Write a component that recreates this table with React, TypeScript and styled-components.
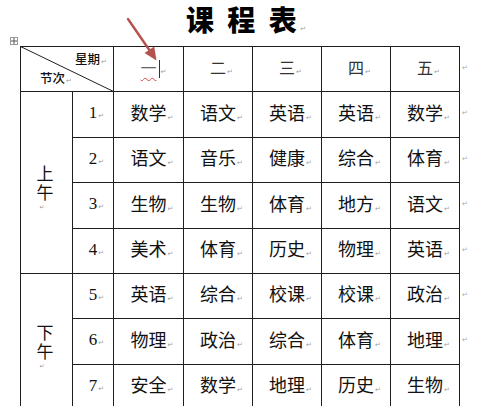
import React from "react";
import styled, { createGlobalStyle } from "styled-components";

const GlobalStyle = createGlobalStyle`
  html, body {
    margin: 0;
    padding: 0;
    background: #ffffff;
    overflow: hidden;
  }
  body {
    font-family: "Noto Sans CJK SC", "Noto Sans", sans-serif;
    color: #111;
  }
`;

const Page = styled.div`
  position: relative;
  width: 485px;
  height: 406px;
  overflow: hidden;
  background: #fff;
`;

const TitleRow = styled.div`
  height: 37px;
  box-sizing: border-box;
  padding: 5px 0 0 7px;
  display: flex;
  justify-content: center;
`;

const Title = styled.h1`
  margin: 0;
  font-family: "Noto Sans CJK SC", sans-serif;
  font-size: 28px;
  line-height: 28px;
  font-weight: 900;
  letter-spacing: 3.5px;
  color: #000;
  white-space: pre;
`;

const HandleRow = styled.div`
  height: 9px;
  padding-left: 10px;
  display: flex;
  align-items: flex-start;
`;

const Handle = styled.div`
  width: 8px;
  height: 8px;
  box-sizing: border-box;
  border: 1px solid #9a9a9a;
  display: flex;
  align-items: center;
  justify-content: center;
  background: #fff;
`;

const TableRow = styled.div`
  display: flex;
  margin-left: 20px;
`;

const Grid = styled.div`
  display: grid;
  grid-template-columns: 52px 41px 70px 69px 69px 69px 69px;
  grid-template-rows: 45px 46px 45px 46px 45px 45px 46px 45px;
  border-left: 1px solid #1e1e1e;
  border-top: 1px solid #1e1e1e;
`;

const Cell = styled.div<{ $span?: number; $rows?: number }>`
  box-sizing: border-box;
  border-right: 1px solid #1e1e1e;
  border-bottom: 1px solid #1e1e1e;
  display: flex;
  align-items: center;
  justify-content: center;
  ${(p) => (p.$span ? `grid-column: span ${p.$span};` : "")}
  ${(p) => (p.$rows ? `grid-row: span ${p.$rows};` : "")}
`;

const HeaderCell = styled(Cell)`
  position: relative;
  flex-direction: column;
  align-items: stretch;
  justify-content: space-between;
  padding: 4px 13px 5px 19px;
`;

const Diagonal = styled.svg`
  position: absolute;
  left: -1px;
  top: -1px;
  pointer-events: none;
`;

const HeadLabel = styled.span<{ $end?: boolean }>`
  align-self: ${(p) => (p.$end ? "flex-end" : "flex-start")};
  font-family: "Noto Sans CJK SC", sans-serif;
  font-size: 12.5px;
  line-height: 15px;
  font-weight: 500;
  color: #111;
  white-space: nowrap;
`;

const DayText = styled.span<{ $active?: boolean }>`
  font-family: "Noto Sans CJK SC", sans-serif;
  font-size: 16px;
  line-height: 18px;
  font-weight: 400;
  color: ${(p) => (p.$active ? "#666666" : "#333333")};
  white-space: nowrap;
`;

const Squiggle = styled.span`
  text-decoration-line: underline;
  text-decoration-style: wavy;
  text-decoration-color: #d9484a;
  text-decoration-thickness: 1px;
  text-underline-offset: 3px;
`;

const PeriodText = styled.div`
  font-family: "Noto Sans CJK SC", sans-serif;
  font-size: 17px;
  line-height: 19px;
  font-weight: 400;
  color: #111;
  display: flex;
  flex-direction: column;
  align-items: center;
  margin-left: -3px;
`;

const PeriodMark = styled.span`
  height: 0;
  font-family: "DejaVu Sans", sans-serif;
  font-size: 6px;
  line-height: 8px;
  color: #9a9a9a;
  margin: 2px 0 0 -6px;
`;

const NumText = styled.span`
  font-family: "Liberation Serif", serif;
  font-size: 17px;
  line-height: 20px;
  color: #111;
  white-space: nowrap;
`;

const Subject = styled.span`
  font-family: "Noto Sans CJK SC", sans-serif;
  font-size: 18px;
  line-height: 22px;
  font-weight: 400;
  color: #111;
  white-space: nowrap;
`;

const MarkBox = styled.span`
  display: inline-block;
  width: 0;
  overflow: visible;
  white-space: nowrap;
  vertical-align: baseline;
`;

const MarkGlyph = styled.span`
  font-family: "DejaVu Sans", sans-serif;
  font-size: 7px;
  color: #a0a0a0;
  margin-left: 1px;
`;

const Caret = styled.span`
  display: inline-block;
  width: 1px;
  height: 18px;
  background: #333;
  margin-left: 2px;
  vertical-align: -4px;
`;

const MarkColumn = styled.div`
  display: grid;
  grid-template-rows: 45px 46px 45px 46px 45px 45px 46px;
  padding-top: 1px;
  margin-left: 2px;
`;

const RowMark = styled.span`
  display: flex;
  align-items: center;
  font-family: "DejaVu Sans", sans-serif;
  font-size: 7px;
  color: #a8a8a8;
  padding-bottom: 4px;
`;

const TitleMark = styled.span`
  font-family: "DejaVu Sans", sans-serif;
  font-size: 7px;
  font-weight: 400;
  color: #a0a0a0;
  letter-spacing: 0;
`;

const Overlay = styled.svg`
  position: absolute;
  left: 0;
  top: 0;
  pointer-events: none;
`;

const Mark: React.FC = () => (
  <MarkBox>
    <MarkGlyph>↵</MarkGlyph>
  </MarkBox>
);

const days = ["一", "二", "三", "四", "五"];

const morning = [
  ["数学", "语文", "英语", "英语", "数学"],
  ["语文", "音乐", "健康", "综合", "体育"],
  ["生物", "生物", "体育", "地方", "语文"],
  ["美术", "体育", "历史", "物理", "英语"],
];

const afternoon = [
  ["英语", "综合", "校课", "校课", "政治"],
  ["物理", "政治", "综合", "体育", "地理"],
  ["安全", "数学", "地理", "历史", "生物"],
];

const renderRows = (rows: string[][], start: number) =>
  rows.map((row, i) => (
    <React.Fragment key={start + i}>
      <Cell>
        <NumText>
          {start + i}
          <Mark />
        </NumText>
      </Cell>
      {row.map((s, j) => (
        <Cell key={j}>
          <Subject>
            {s}
            <Mark />
          </Subject>
        </Cell>
      ))}
    </React.Fragment>
  ));

export default function App() {
  return (
    <Page>
      <GlobalStyle />
      <TitleRow>
        <Title>
          课 程 表<TitleMark>↵</TitleMark>
        </Title>
      </TitleRow>
      <HandleRow>
        <Handle>
          <svg width="6" height="6" viewBox="0 0 6 6">
            <path d="M3 0 V6 M0 3 H6" stroke="#555" strokeWidth="1" />
          </svg>
        </Handle>
      </HandleRow>
      <TableRow>
        <Grid>
          <HeaderCell $span={2}>
            <Diagonal width="94" height="46" viewBox="0 0 94 46">
              <line x1="0.5" y1="0.5" x2="93.5" y2="45.5" stroke="#1e1e1e" strokeWidth="1" />
            </Diagonal>
            <HeadLabel $end>
              星期
              <Mark />
            </HeadLabel>
            <HeadLabel>
              节次
              <Mark />
            </HeadLabel>
          </HeaderCell>
          {days.map((d, i) => (
            <Cell key={d}>
              <DayText $active={i === 0}>
                {i === 0 ? <Squiggle>{d}</Squiggle> : d}
                <MarkBox>
                  {i === 0 && <Caret />}
                  <MarkGlyph>↵</MarkGlyph>
                </MarkBox>
              </DayText>
            </Cell>
          ))}
          <Cell $rows={4}>
            <PeriodText>
              <span>上</span>
              <span>午</span>
              <PeriodMark>↵</PeriodMark>
            </PeriodText>
          </Cell>
          {renderRows(morning, 1)}
          <Cell $rows={4}>
            <PeriodText>
              <span>下</span>
              <span>午</span>
              <PeriodMark>↵</PeriodMark>
            </PeriodText>
          </Cell>
          {renderRows(afternoon, 5)}
          <Cell />
          <Cell />
          <Cell />
          <Cell />
          <Cell />
          <Cell />
        </Grid>
        <MarkColumn>
          {Array.from({ length: 7 }).map((_, i) => (
            <RowMark key={i}>↵</RowMark>
          ))}
        </MarkColumn>
      </TableRow>
      <Overlay width="485" height="100" viewBox="0 0 485 100">
        <line x1="128" y1="19" x2="150" y2="51" stroke="#b5524f" strokeWidth="2.4" strokeLinecap="round" />
        <polygon points="144.5,53 154.2,46.6 156.5,60.5" fill="#b5524f" />
      </Overlay>
    </Page>
  );
}
